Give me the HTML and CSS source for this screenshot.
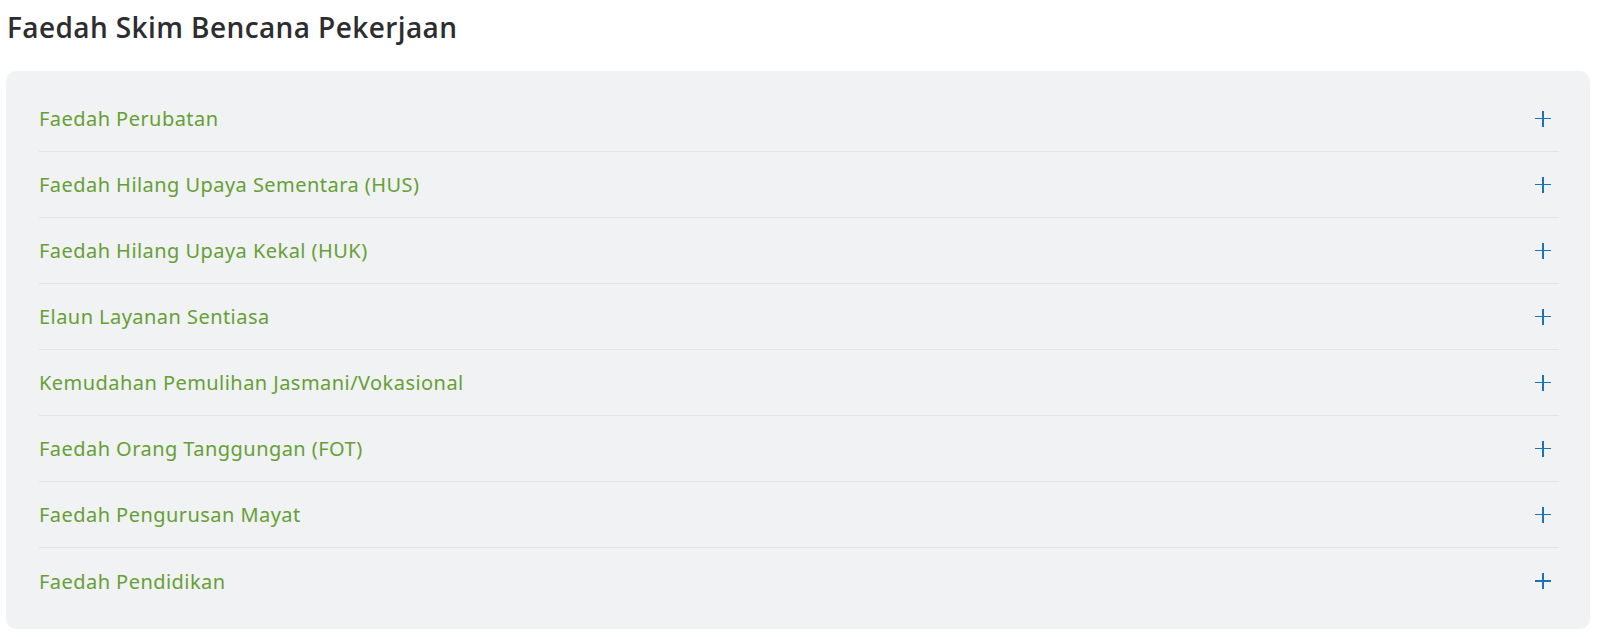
FILE: index.html
```html
<!DOCTYPE html>
<html>
<head>
<meta charset="utf-8">
<link rel="stylesheet" href="styles.css">
</head>
<body>
<h2 class="title">Faedah Skim Bencana Pekerjaan</h2>
<div class="card">
  <div class="row"><span class="label">Faedah Perubatan</span><span class="plus"></span></div>
  <div class="row"><span class="label">Faedah Hilang Upaya Sementara (HUS)</span><span class="plus"></span></div>
  <div class="row"><span class="label">Faedah Hilang Upaya Kekal (HUK)</span><span class="plus"></span></div>
  <div class="row"><span class="label">Elaun Layanan Sentiasa</span><span class="plus"></span></div>
  <div class="row"><span class="label">Kemudahan Pemulihan Jasmani/Vokasional</span><span class="plus"></span></div>
  <div class="row"><span class="label">Faedah Orang Tanggungan (FOT)</span><span class="plus"></span></div>
  <div class="row"><span class="label">Faedah Pengurusan Mayat</span><span class="plus"></span></div>
  <div class="row"><span class="label">Faedah Pendidikan</span><span class="plus"></span></div>
</div>
</body>
</html>
```
FILE: styles.css
```css
html, body { margin: 0; padding: 0; background: #fff; }
body { padding: 0 10px 0 6px; }
.title {
  font-family: "Open Sans", sans-serif;
  font-weight: 600;
  font-size: 28px;
  line-height: 38px;
  color: #2d2d2f;
  margin: 0;
  padding: 8px 0 0 1px;
  height: 71px;
  box-sizing: border-box;
  letter-spacing: 0.4px;
}
.card {
  background: #f0f2f4;
  border-radius: 10px;
  padding: 15px 31px 15px 33px;
}
.row {
  display: flex;
  align-items: center;
  justify-content: space-between;
  height: 66px;
  box-sizing: border-box;
  border-bottom: 1px solid #e1e3e6;
}
.row:last-child { border-bottom: none; height: 66px; }
.label {
  font-family: "Noto Sans", sans-serif;
  font-size: 20px;
  color: #66a035;
  letter-spacing: 0.45px;
}
.plus {
  position: relative;
  width: 16px;
  height: 16px;
  margin-right: 8px;
}
.plus::before, .plus::after {
  content: "";
  position: absolute;
  background: #1b72b8;
}
.plus::before { left: 0; right: 0; top: 7px; height: 1.5px; }
.plus::after { top: 0; bottom: 0; left: 7px; width: 1.5px; }
```
